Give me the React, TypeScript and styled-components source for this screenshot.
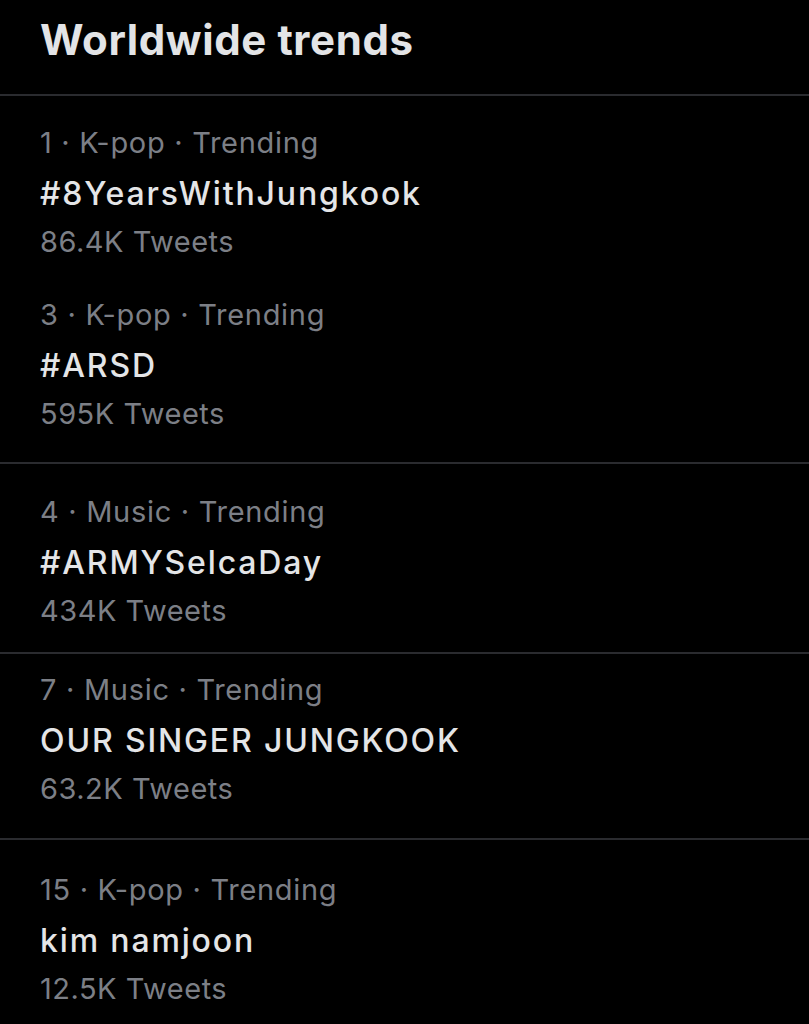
import React from "react";
import styled, { createGlobalStyle } from "styled-components";

const GlobalStyle = createGlobalStyle`
  html, body {
    margin: 0;
    padding: 0;
    background: #000;
  }
  body {
    font-family: Inter, "Noto Sans", "Liberation Sans", sans-serif;
    -webkit-font-smoothing: antialiased;
  }
`;

const Page = styled.div`
  width: 809px;
  min-height: 1024px;
  background: #000;
  display: flex;
  flex-direction: column;
`;

const Header = styled.header`
  padding: 16px 40px 30px;
  border-bottom: 2px solid #2a2b2f;
`;

const Title = styled.h1`
  margin: 0;
  font-size: 42px;
  line-height: 48px;
  font-weight: 700;
  color: #e3e4e6;
  letter-spacing: 0.6px;
`;

const Section = styled.section<{ $top: number; $bottom: number; $divider?: boolean }>`
  padding: ${(p) => p.$top}px 40px ${(p) => p.$bottom}px;
  display: flex;
  flex-direction: column;
  gap: 24px;
  border-bottom: ${(p) => (p.$divider ? "2px solid #2a2b2f" : "none")};
`;

const Item = styled.div`
  display: flex;
  flex-direction: column;
`;

const Meta = styled.div`
  font-size: 29px;
  line-height: 52px;
  font-weight: 400;
  color: #7c7f86;
  letter-spacing: 0.7px;
`;

const Name = styled.div`
  font-size: 32px;
  line-height: 50px;
  font-weight: 500;
  color: #e4e5e7;
  letter-spacing: 1.85px;
`;

const Count = styled.div`
  font-size: 29px;
  line-height: 46px;
  font-weight: 400;
  color: #7c7f86;
  letter-spacing: 0.5px;
`;

type Trend = { rank: number; cat: string; name: string; count: string };

const sections: { top: number; bottom: number; divider: boolean; items: Trend[] }[] = [
  {
    top: 21,
    bottom: 25,
    divider: true,
    items: [
      { rank: 1, cat: "K-pop", name: "#8YearsWithJungkook", count: "86.4K Tweets" },
      { rank: 3, cat: "K-pop", name: "#ARSD", count: "595K Tweets" },
    ],
  },
  {
    top: 22,
    bottom: 18,
    divider: true,
    items: [{ rank: 4, cat: "Music", name: "#ARMYSelcaDay", count: "434K Tweets" }],
  },
  {
    top: 10,
    bottom: 26,
    divider: true,
    items: [{ rank: 7, cat: "Music", name: "OUR SINGER JUNGKOOK", count: "63.2K Tweets" }],
  },
  {
    top: 24,
    bottom: 0,
    divider: false,
    items: [{ rank: 15, cat: "K-pop", name: "kim namjoon", count: "12.5K Tweets" }],
  },
];

export default function App() {
  return (
    <>
      <GlobalStyle />
      <Page>
        <Header>
          <Title>Worldwide trends</Title>
        </Header>
        {sections.map((s, i) => (
          <Section key={i} $top={s.top} $bottom={s.bottom} $divider={s.divider}>
            {s.items.map((t) => (
              <Item key={t.rank}>
                <Meta>
                  {t.rank} · {t.cat} · Trending
                </Meta>
                <Name>{t.name}</Name>
                <Count>{t.count}</Count>
              </Item>
            ))}
          </Section>
        ))}
      </Page>
    </>
  );
}
